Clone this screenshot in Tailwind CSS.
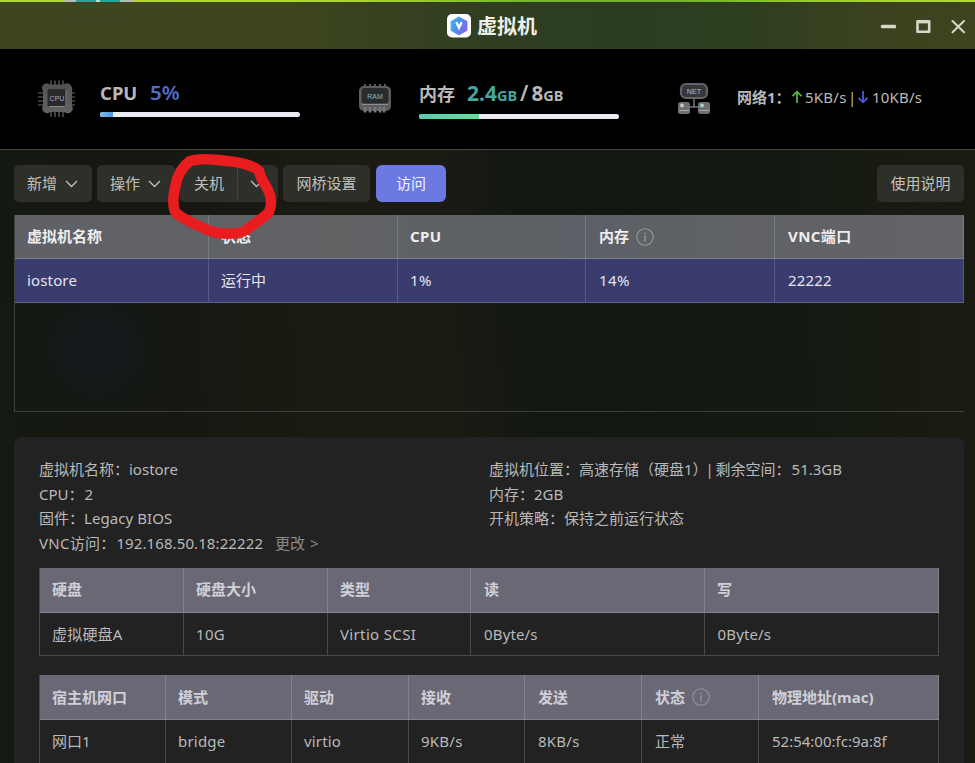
<!DOCTYPE html>
<html lang="zh-CN">
<head>
<meta charset="utf-8">
<title>虚拟机</title>
<script src="https://cdn.jsdelivr.net/npm/@tailwindcss/browser@4"></script>
</head>
<body class="w-[975px] h-[763px] overflow-hidden bg-[#151812] font-['Noto_Sans','Noto_Sans_CJK_SC',sans-serif] text-[15px] leading-[22px] text-[#b9b9b9] whitespace-nowrap">
<div class="relative w-[975px] h-[763px] overflow-hidden flex flex-col bg-[radial-gradient(circle_at_97px_350px,#14181a_0px,#14181a_25px,transparent_70px),linear-gradient(86deg,#141911_0%,#151811_20%,#1b1b13_37%,#1b1b13_45%,#121712_56%,#141a11_84%,#1a1b13_94%,#191a12_100%)]">

  <div class="h-[2px] shrink-0 flex bg-[linear-gradient(90deg,#b4d832_0%,#b0d630_35%,#72b52c_55%,#72b52c_70%,#acd630_92%,#b4da32_100%)]">
    <div class="ml-[63px] w-[13px] bg-[#b9bdb5]"></div>
    <div class="w-[20px] bg-[#20a898]"></div>
    <div class="w-[4px] bg-[#c5d5cf]"></div>
    <div class="w-[20px] bg-[#20a898]"></div>
    <div class="w-[13px] bg-[#b9bdb5]"></div>
  </div>

  <header class="h-[47px] shrink-0 flex items-center pl-[447px] pr-[9px] text-[#edf0e9] bg-[radial-gradient(ellipse_at_95px_18px,#38453099_0px,transparent_65px),linear-gradient(90deg,#3f4520_0%,#3e451f_30%,#344020_43%,#2d3d20_57%,#2b3e1e_75%,#3c421f_90%,#3e441e_100%)]">
    <svg class="w-6 h-6 mr-[6px]" viewBox="0 0 24 24">
      <defs><linearGradient id="hex" x1="0" y1="0" x2="1" y2="0.6"><stop offset="0" stop-color="#4ab8f2"/><stop offset=".5" stop-color="#4a90ee"/><stop offset="1" stop-color="#7a69e8"/></linearGradient></defs>
      <rect width="24" height="23.5" rx="5" fill="#fbfdff"/>
      <path d="M12 3.2 19.8 7.5V16.3L12 20.6 4.2 16.3V7.5Z" fill="url(#hex)" stroke="url(#hex)" stroke-width="1.2" stroke-linejoin="round"/>
      <path d="M9.4 8.300 12 13.800 14.6 8.300" fill="none" stroke="#fff" stroke-width="2.300"/>
    </svg>
    <h1 class="pt-[2px] text-[20px] font-bold leading-[28px]">虚拟机</h1>
    <div class="ml-auto flex items-center gap-[19px] text-[#d3d8c8]">
      <svg class="w-4 h-4" viewBox="0 0 16 16"><path d="M2.500 8.500h12" stroke="currentColor" stroke-width="3.6" stroke-linecap="round"/></svg>
      <svg class="w-4 h-4" viewBox="0 0 16 16"><path d="M2.500 3.200h11.700v10.500H2.500Z" fill="none" stroke="currentColor" stroke-width="2.6" stroke-linejoin="round"/><path d="M2 4.200h12" stroke="currentColor" stroke-width="2.400"/></svg>
      <svg class="w-4 h-4" viewBox="0 0 16 16"><path d="M2.5 3 14 14.3M14 3 2.5 14.3" stroke="currentColor" stroke-width="2.1" stroke-linecap="round"/></svg>
    </div>
  </header>

  <section class="h-[101px] shrink-0 bg-black border-b border-[#45463f] flex">
    <div class="w-[358px] pl-[38px] pt-[30px] flex">
      <svg class="w-[38px] h-[38px] shrink-0 mr-[24px]" viewBox="0 0 38 38">
        <defs><linearGradient id="chip" x1="0" y1="0" x2="0" y2="1"><stop offset="0" stop-color="#505254"/><stop offset="1" stop-color="#626262"/></linearGradient></defs>
        <path d="M13 1.500v5M17 1.500v5M21 1.500v5M25 1.500v5M13 33v5M17 33v5M21 33v5M25 33v5M0 14h5M0 18h5M0 22h5M0 26h5M33 14h4M33 18h4M33 22h4M33 26h4" stroke="#6a696a" stroke-width="1.200"/>
        <path d="M8 4.500q3-.5 4 1h14q3-2.500 6 0t2 7v14q2 4-1 6.500T26 33H12q-3 2.500-6 0t-1-7V12Q3 8 5 6T8 4.500Z" fill="url(#chip)"/>
        <rect x="9.500" y="10" width="19" height="18" rx="2" fill="#29292b"/>
        <path d="M28 11v15q0 1.500-1.500 1.500H11" stroke="#898989" stroke-width="1" fill="none"/>
        <text x="19" y="22" text-anchor="middle" font-family="Liberation Sans" font-size="7" fill="#aaa4d4">CPU</text>
      </svg>
      <div>
        <div class="h-[33px] flex items-baseline font-bold leading-[26px]"><span class="text-[18.500px] w-[50px] text-[#b8b8b8]">CPU</span><span class="text-[20.500px] font-semibold text-[#536dc5]">5%</span></div>
        <div class="w-[200px] h-[5px] rounded-full bg-[#ebebf2] overflow-hidden"><div class="w-[13px] h-full bg-linear-to-r from-[#7eb9ec] to-[#4f96e2]"></div></div>
      </div>
    </div>
    <div class="w-[319px] pt-[31px] flex">
      <svg class="w-[34px] h-[32px] mt-[3px] shrink-0 mr-[27px]" viewBox="0 0 34 32">
        <path d="M7 1v4M12 1v4M17 1v4M22 1v4M27 1v4" stroke="#56575a" stroke-width="2"/>
        <rect x="1" y="3" width="32" height="25" rx="5" fill="#5c5e61"/>
        <rect x="3.500" y="5" width="27" height="15.500" rx="3" fill="#292c2f"/>
        <path d="M4 21.500h26" stroke="#8d8f91"/>
        <path d="M7 24v5.500M12 24v5.500M17 24v5.500M22 24v5.500M26 24v5.500" stroke="#77797b" stroke-width="2.600"/>
        <text x="17" y="16" text-anchor="middle" font-family="Liberation Sans" font-size="7" fill="#7fb9c4">RAM</text>
      </svg>
      <div>
        <div class="h-[34px] flex items-baseline font-bold leading-[26px] text-[#b8b8b8]"><span class="text-[18px] w-[48px]">内存</span><span class="text-[21px] text-[#46a79f]">2.4</span><span class="text-[14.500px] text-[#46a79f]">GB</span><span class="text-[21px] mx-[3px] font-semibold">/</span><span class="text-[20.500px]">8</span><span class="text-[14.500px]">GB</span></div>
        <div class="w-[200px] h-[5px] rounded-full bg-[#ebebf2] overflow-hidden"><div class="w-[60px] h-full bg-linear-to-r from-[#5bcab5] to-[#69dc9c]"></div></div>
      </div>
    </div>
    <div class="pt-[33px] flex">
      <svg class="w-[34px] h-[34px] shrink-0 mr-[26px]" viewBox="0 0 34 34">
        <rect x="4" y="2" width="26" height="14" rx="5" fill="#35373a" stroke="#626467" stroke-width="2.200"/>
        <text x="17" y="11.700" text-anchor="middle" font-family="Liberation Sans" font-size="7.200" fill="#bcbcbc">NET</text>
        <path d="M17 17v8M12 25h10" stroke="#747678" stroke-width="1.500"/>
        <rect x="1" y="20" width="12" height="12" rx="2.500" fill="#6c6f72"/><rect x="21" y="20" width="12" height="12" rx="2.500" fill="#6c6f72"/>
        <circle cx="5" cy="23.500" r="2" fill="#c3c7b7"/><circle cx="25" cy="23.500" r="2" fill="#a8ccca"/>
        <path d="M2 28.500h10M22 28.500h10" stroke="#a6a8aa"/>
      </svg>
      <div class="h-[30px] flex items-center">
        <span class="w-[53px] font-bold">网络1：</span>
        <svg class="w-3 h-[14px] mr-[3px] relative left-[1px]" viewBox="0 0 12 14"><path d="M6 13V2M1.500 6.200 6 1.700l4.500 4.500" fill="none" stroke="#4fb83b" stroke-width="1.800"/></svg>
        <span class="w-[44px] tracking-[0.250px]">5KB/s</span><span class="w-[7px] -ml-px mr-px">|</span>
        <svg class="w-3 h-[14px] mr-[4px] relative left-[1px]" viewBox="0 0 12 14"><path d="M6 1v11M1.500 7.800 6 12.300l4.500-4.500" fill="none" stroke="#5057df" stroke-width="1.800"/></svg>
        <span class="tracking-[0.200px]">10KB/s</span>
      </div>
    </div>
  </section>

  <nav class="mt-[15px] mx-[14px] mr-[11px] h-[37px] shrink-0 flex text-[#c1c1b9] leading-[36px]">
    <button class="w-[78px] mr-[5px] rounded-[5px] bg-[#2e2f29] flex items-center pl-[13px] pb-[2px] gap-[8px]">新增<svg class="w-[13px] h-[8px] mt-[2px]" viewBox="0 0 13 8"><path d="M1 1 6.500 6.500 12 1" fill="none" stroke="currentColor" stroke-width="1.300"/></svg></button>
    <button class="w-[78px] mr-[5px] rounded-[5px] bg-[#2e2f29] flex items-center pl-[13px] pb-[2px] gap-[8px]">操作<svg class="w-[13px] h-[8px] mt-[2px]" viewBox="0 0 13 8"><path d="M1 1 6.500 6.500 12 1" fill="none" stroke="currentColor" stroke-width="1.300"/></svg></button>
    <div class="w-[98px] mr-[5px] rounded-[5px] bg-[#2e2f29] flex items-center">
      <button class="w-[58px] h-full border-r border-[#42433d] pl-[14px] pb-[2px] text-left">关机</button>
      <button class="pl-[12px]"><svg class="w-[13px] h-[8px]" viewBox="0 0 13 8"><path d="M1 1 6.500 6.500 12 1" fill="none" stroke="currentColor" stroke-width="1.300"/></svg></button>
    </div>
    <button class="w-[87px] mr-[6px] pb-[2px] rounded-[5px] bg-[#2e2f29]">网桥设置</button>
    <button class="w-[70px] pb-[2px] rounded-[6px] bg-[#6b7ae3] text-[#f2f3fb]">访问</button>
    <button class="w-[87px] ml-auto pb-[2px] rounded-[5px] bg-[#2e2f29]">使用说明</button>
  </nav>

  <section class="mt-[13px] ml-[14px] w-[950px] h-[197px] shrink-0 border-l border-b border-[#3d4039] text-[#e4e5ef]">
    <div class="grid grid-cols-[194px_189px_188px_189px_189px] h-[44px] border-b border-[#7e8190] bg-[linear-gradient(90deg,#5f6167,#606264_35%,#5d6066_60%,#636467)] font-bold text-[#eeeeef] leading-[43px]">
      <div class="pl-[12px] border-r border-[#777a7e]">虚拟机名称</div>
      <div class="pl-[12px] border-r border-[#777a7e]">状态</div>
      <div class="pl-[12px] border-r border-[#777a7e] tracking-[0.400px]">CPU</div>
      <div class="pl-[13px] border-r border-[#777a7e] flex items-center gap-[7px]">内存<svg class="w-[18px] h-[18px]" viewBox="0 0 18 18"><circle cx="9" cy="9" r="8.200" fill="none" stroke="#989a9d" stroke-width="1.100"/><path d="M9 4.500v1.500M9 7.500v6" stroke="#989a9d" stroke-width="1.400"/></svg></div>
      <div class="pl-[13px] border-r border-[#777a7e] tracking-[0.400px]">VNC端口</div>
    </div>
    <div class="grid grid-cols-[194px_189px_188px_189px_189px] h-[44px] border-b border-[#616485] bg-[#3b3c6e] leading-[43px]">
      <div class="pl-[12px] border-r border-[#565984] tracking-[0.150px]">iostore</div>
      <div class="pl-[12px] border-r border-[#565984]">运行中</div>
      <div class="pl-[12px] border-r border-[#565984] tracking-[0.400px]">1%</div>
      <div class="pl-[13px] border-r border-[#565984] tracking-[0.400px]">14%</div>
      <div class="pl-[13px] border-r border-[#565984] tracking-[0.200px]">22222</div>
    </div>
  </section>

  <section class="mt-[25px] ml-[14px] w-[950px] h-[330px] shrink-0 rounded-t-[8px] bg-[#222222] px-[25px] pt-[20px]">
    <div class="grid grid-cols-[450px_450px] leading-[24.700px] h-[111px]">
      <div>
        <p>虚拟机名称：iostore</p>
        <p>CPU：<span class="ml-px">2</span></p>
        <p>固件：<span class="tracking-[0.080px]">Legacy BIOS</span></p>
        <p><span class="tracking-[0.250px]">VNC访问：</span><span class="ml-px tracking-[0.100px]">192.168.50.18:22222</span><a class="ml-[12px] text-[#8b8b8b]">更改<span class="ml-[5px]">&gt;</span></a></p>
      </div>
      <div>
        <p>虚拟机位置：高速存储（硬盘1）<span class="inline-block w-[10px] -ml-[2px]">|</span>剩余空间：<span class="ml-px">51.3GB</span></p>
        <p>内存：2GB</p>
        <p>开机策略：保持之前运行状态</p>
      </div>
    </div>

    <div class="w-[900px] h-[88px] border-l border-b border-[#4a4a4b]">
      <div class="grid grid-cols-[144px_144px_143px_234px_234px] h-[45px] border-b border-[#85848f] bg-[#696874] font-bold text-[#d0d0d8] leading-[42px]">
        <div class="pl-[12px] border-r border-[#82818c]">硬盘</div>
        <div class="pl-[12px] border-r border-[#82818c]">硬盘大小</div>
        <div class="pl-[12px] border-r border-[#82818c]">类型</div>
        <div class="pl-[13px] border-r border-[#82818c]">读</div>
        <div class="pl-[12px] border-r border-[#82818c]">写</div>
      </div>
      <div class="grid grid-cols-[144px_144px_143px_234px_234px] h-[42px] leading-[43px]">
        <div class="pl-[12px] border-r border-[#4a4a4b] tracking-[0.200px]">虚拟硬盘A</div>
        <div class="pl-[12px] border-r border-[#4a4a4b] tracking-[0.300px]">10G</div>
        <div class="pl-[12px] border-r border-[#4a4a4b] tracking-[0.350px]">Virtio SCSI</div>
        <div class="pl-[13px] border-r border-[#4a4a4b] tracking-[0.150px]">0Byte/s</div>
        <div class="pl-[12.500px] border-r border-[#4a4a4b] tracking-[0.150px]">0Byte/s</div>
      </div>
    </div>

    <div class="mt-[19px] w-[900px] h-[88px] border-l border-[#4a4a4b]">
      <div class="grid grid-cols-[126px_126px_117px_116px_117px_117px_180px] h-[45px] border-b border-[#85848f] bg-[#696874] font-bold text-[#d0d0d8] leading-[44px]">
        <div class="pl-[12px] border-r border-[#82818c]">宿主机网口</div>
        <div class="pl-[12px] border-r border-[#82818c]">模式</div>
        <div class="pl-[12px] border-r border-[#82818c]">驱动</div>
        <div class="pl-[12px] border-r border-[#82818c]">接收</div>
        <div class="pl-[13px] border-r border-[#82818c]">发送</div>
        <div class="pl-[13px] border-r border-[#82818c] flex items-center gap-[7px]">状态<svg class="w-[18px] h-[18px]" viewBox="0 0 18 18"><circle cx="9" cy="9" r="8.200" fill="none" stroke="#96959f" stroke-width="1.100"/><path d="M9 4.500v1.500M9 7.500v6" stroke="#96959f" stroke-width="1.400"/></svg></div>
        <div class="pl-[13px] border-r border-[#82818c]">物理地址(mac)</div>
      </div>
      <div class="grid grid-cols-[126px_126px_117px_116px_117px_117px_180px] h-[43px] leading-[43px]">
        <div class="pl-[12px] border-r border-[#4a4a4b]">网口1</div>
        <div class="pl-[12px] border-r border-[#4a4a4b] tracking-[0.200px]">bridge</div>
        <div class="pl-[12px] border-r border-[#4a4a4b] tracking-[0.150px]">virtio</div>
        <div class="pl-[12px] border-r border-[#4a4a4b] tracking-[0.250px]">9KB/s</div>
        <div class="pl-[13px] border-r border-[#4a4a4b] tracking-[0.250px]">8KB/s</div>
        <div class="pl-[13px] border-r border-[#4a4a4b]">正常</div>
        <div class="pl-[13px] border-r border-[#4a4a4b]">52:54:00:fc:9a:8f</div>
      </div>
    </div>
  </section>

  <!-- Hand-drawn highlight around the shutdown button -->
  <svg class="absolute left-[160px] top-[150px] w-[125px] h-[95px] pointer-events-none" viewBox="160 150 125 95">
    <path d="M257 169C250 165 239 162 227 161C213 159 200 158 190 161C183 166 177 176 175 188C173 197 172 207 176 213C183 219 194 224 203 228Q213 233 223 233.500C232 234 240 234 246 230C253 224 263 219 269 212C272 205 272 198 268 190C265 184 261 180 259 171" fill="none" stroke="#e91c20" stroke-width="10.500" stroke-linecap="round" stroke-linejoin="round"/>
  </svg>
</div>
</body>
</html>
